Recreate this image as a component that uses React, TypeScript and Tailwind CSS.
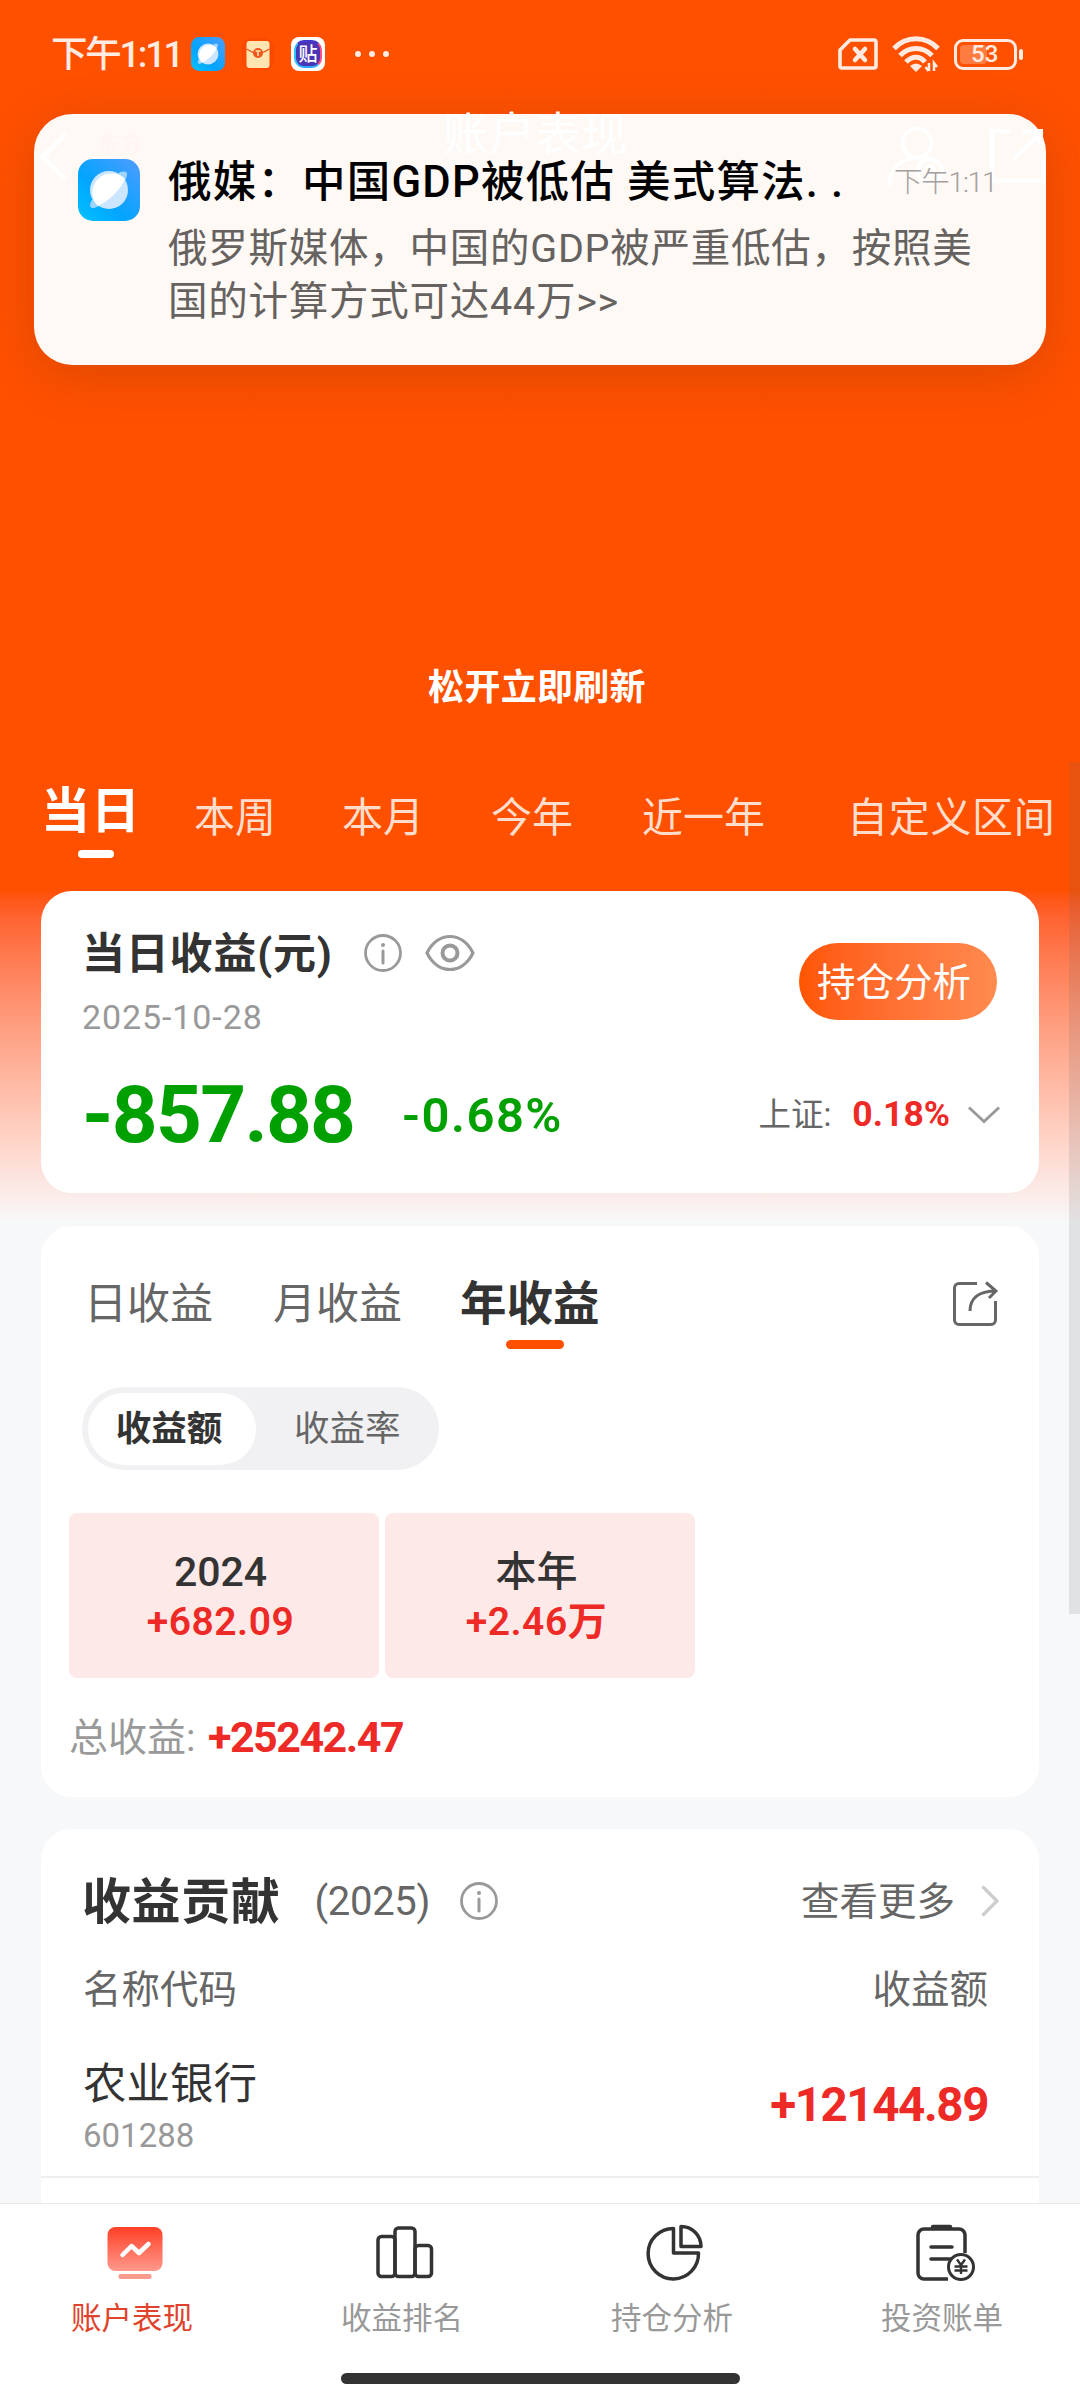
import type { ReactNode } from 'react'
import clsx from 'clsx'

const ranges = [
  { label: '本周', className: 'ml-[53px]' },
  { label: '本月', className: 'ml-[66px]' },
  { label: '今年', className: 'ml-[67px]' },
  { label: '近一年', className: 'ml-[69px]' },
  { label: '自定义区间', className: 'ml-[82px] tracking-[0.7px]' },
]

function BrowserIcon({ className }: { className?: string }) {
  return (
    <svg viewBox="0 0 62 62" className={className}>
      <defs>
        <linearGradient id="sky" x1="0" y1="1" x2="1" y2="0">
          <stop offset="0" stopColor="#00c3ff" />
          <stop offset="0.4" stopColor="#03a4ff" />
          <stop offset="1" stopColor="#4f9cff" />
        </linearGradient>
      </defs>
      <rect width="62" height="62" rx="15" fill="url(#sky)" />
      <path d="M42 13c4-1 8-1 7 3-1 6-6 13-16 22-8 7-16 12-19 11-3-1-2-5 0-8z" fill="#9fd4ff" />
      <circle cx="31" cy="31" r="19" fill="#cde6ff" />
      <path d="M47 20A19 19 0 1 0 20 47C31 42 43 30 47 20z" fill="#fff" />
    </svg>
  )
}

function EnvelopeIcon() {
  return (
    <svg viewBox="0 0 34 34" className="size-[34px]">
      <rect x="1" y="1" width="32" height="32" rx="9" fill="#fb4a00" />
      <rect x="5.500" y="4" width="23" height="27" rx="3" fill="#ffe6b0" />
      <path d="M5.500 12c5 3 7 4.500 11.500 4.500S23.500 15 28.500 12" fill="none" stroke="#e8561c" strokeWidth="1.300" />
      <circle cx="17" cy="16" r="5" fill="#f0541b" />
      <path d="M14.500 14h5M17 14v5" stroke="#ffe6b0" strokeWidth="1.500" />
    </svg>
  )
}

function TiebaIcon() {
  return (
    <div className="flex size-[34px] items-center justify-center rounded-[8px] bg-white">
      <div className="flex size-[28px] items-center justify-center rounded-[10px] border-2 border-t-[#4338c9] border-r-[#ff4d80] border-b-[#2aa8ff] border-l-[#2ac4ff] bg-[#4a35b5] text-[19px] leading-none font-medium text-white">
        贴
      </div>
    </div>
  )
}

function StatusBar() {
  return (
    <div className="flex h-[108px] items-center pr-[57px] pl-[51px] text-[#ffebe1]">
      <span className="mt-[2px] w-[140px] text-[36.500px] leading-none font-medium tracking-[-2.300px] whitespace-nowrap">下午1:11</span>
      <BrowserIcon className="size-[34px]" />
      <div className="ml-4"><EnvelopeIcon /></div>
      <div className="ml-4"><TiebaIcon /></div>
      <div className="ml-[30px] flex gap-[8px]">
        <i className="size-[6px] rounded-full bg-current" />
        <i className="size-[6px] rounded-full bg-current" />
        <i className="size-[6px] rounded-full bg-current" />
      </div>

      <svg viewBox="0 0 40 32" className="ml-auto h-[32px] w-[40px]" fill="none" stroke="currentColor" strokeWidth="3.600" strokeLinejoin="round">
        <path d="M12 2h24a2 2 0 0 1 2 2v24a2 2 0 0 1-2 2H4a2 2 0 0 1-2-2V12z" />
        <path d="M17 11l10 11M27 11L17 22" strokeWidth="4.500" strokeLinecap="round" />
      </svg>
      <svg viewBox="0 0 48 36" className="ml-[14px] h-[36px] w-[48px]" fill="none" stroke="currentColor" strokeWidth="5">
        <path d="M2 12.500C14-.5 34-.5 46 12.500" />
        <path d="M8 19.500c9-9.500 23-9.500 32 0" />
        <path d="M14 26c6-6.500 14-6.500 19 0" />
        <path d="M18 30q6-5 12 0l-6 6z" fill="currentColor" stroke="none" />
        <path d="M37 27v8M33.500 31l3 4M42 35v-8l3 4" strokeWidth="2.500" />
      </svg>
      <div className="ml-[14px] flex h-[31px] w-[63px] items-center rounded-[9px] border-[3px] border-current p-[3px]">
        <div className="flex h-full w-[27px] items-center rounded-[4px] bg-white/25 pl-[11px] text-[24px] leading-none font-medium">53</div>
      </div>
      <i className="ml-[2px] h-[11px] w-[4px] rounded-full bg-current" />
    </div>
  )
}

// Page header, shows faintly through the heads-up notification
function Header() {
  return (
    <header className="relative z-20 flex h-[96px] items-center pl-[38px] text-white">
      <svg viewBox="0 0 32 50" className="h-[50px] w-[32px]" fill="none" stroke="currentColor" strokeWidth="5" strokeLinecap="round">
        <path d="M26 4L5 26l21 21" />
      </svg>
      <span className="-mt-[24px] ml-[26px] w-[50px] text-[23px] leading-none font-black text-[#fff6f3]">东方</span>
      <h1 className="-mt-[44px] ml-[297px] text-[46px] leading-none">账户表现</h1>
      <svg viewBox="0 0 60 60" className="ml-[259px] h-[60px] w-[60px]" fill="none" stroke="currentColor" strokeWidth="4">
        <circle cx="31" cy="17" r="14.500" />
        <path d="M3 60c0-15 10-27 25-28" />
        <circle cx="44" cy="45" r="12" />
        <circle cx="44" cy="45" r="5" strokeWidth="3" />
      </svg>
      <svg viewBox="0 0 56 56" className="ml-[43px] size-[56px]" fill="none" stroke="currentColor" strokeWidth="4">
        <path d="M42 1h12v22L42 6z" fill="currentColor" stroke="none" />
        <path d="M22 3H3v50h51V32M34 3h19M53 3L24 32" />
      </svg>
    </header>
  )
}

function Notification() {
  return (
    <>
      <div className="absolute top-[114px] left-[34px] z-10 h-[251px] w-[1012px] rounded-[38px] bg-[#fef9f5] shadow-[0_10px_50px_rgba(90,50,0,0.22)]" />
      <div className="absolute top-[114px] left-[34px] z-30 flex h-[251px] w-[1012px] pt-[45px] pl-[44px]">
        <BrowserIcon className="size-[62px]" />
        <div className="ml-[28px] flex-1">
          <div className="flex h-[48px] items-center whitespace-nowrap">
            <span className="w-[726px] text-[43.500px] leading-none font-medium tracking-[1.200px] text-black">俄媒：中国GDP被低估 美式算法<span className="tracking-[13px]">..</span></span>
            <span className="mt-[1px] text-[28.500px] leading-none font-light tracking-[-1.300px] text-[#a5a09d]">下午1:11</span>
          </div>
          <p className="mt-[15px] text-[39.500px] leading-[53px] tracking-[0.750px] whitespace-nowrap text-[#666260]">
            俄罗斯媒体，中国的GDP被严重低估，按照美<br />国的计算方式可达44万&gt;&gt;
          </p>
        </div>
      </div>
    </>
  )
}

function InfoIcon() {
  return (
    <svg viewBox="0 0 38 38" className="size-[38px]" fill="none" stroke="#999" strokeWidth="2.800">
      <circle cx="19" cy="19" r="17.500" />
      <path d="M19 17v12" strokeWidth="3" strokeLinecap="round" />
      <circle cx="19" cy="11" r="2" fill="#999" stroke="none" />
    </svg>
  )
}

function Card({ className, children }: { className?: string; children: ReactNode }) {
  return <section className={clsx('mx-[41px] bg-white', className)}>{children}</section>
}

function TodayCard() {
  return (
    <Card className="flex h-[302px] justify-between rounded-[31px] pr-[42px] pl-[41px]">
      <div>
        <div className="mt-[36px] flex h-[52px] items-center">
          <h2 className="mt-[2px] text-[43px] leading-none font-bold tracking-[0.800px] whitespace-nowrap text-[#333]">当日收益(元)</h2>
          <div className="ml-[31px]"><InfoIcon /></div>
          <svg viewBox="0 0 50 38" className="ml-[23px] h-[38px] w-[50px]" fill="none" stroke="#999" strokeWidth="3.200">
            <path d="M2 19C13-3 37-3 48 19 37 41 13 41 2 19z" strokeLinejoin="round" />
            <circle cx="25" cy="19" r="7.500" strokeWidth="4" />
          </svg>
        </div>
        <div className="mt-[17px] text-[34px] leading-[42px] tracking-[0.900px] text-[#999]">2025-10-28</div>
        <div className="mt-[37px] flex h-[80px] items-center text-[#00a000]">
          <span className="w-[320px] text-[80px] leading-none font-bold tracking-[-1.700px]">-857.88</span>
          <span className="text-[49px] leading-none font-semibold tracking-[1.500px]">-0.68%</span>
        </div>
      </div>
      <div className="flex flex-col items-end">
        <button className="mt-[52px] h-[77px] w-[198px] rounded-full bg-linear-to-r from-[#ff5500] to-[#ff8a4f] pt-[3px] pr-[8px] text-[38.500px] leading-none text-white">持仓分析</button>
        <div className="mt-[75px] flex h-[40px] items-center">
          <span className="text-[32.500px] leading-none text-[#666]">上证:</span>
          <span className="ml-[21px] text-[35.500px] leading-none font-bold text-[#ee2a26]">0.18%</span>
          <svg viewBox="0 0 32 18" className="-mr-[3px] ml-[18px] h-[18px] w-[32px]" fill="none" stroke="#999" strokeWidth="2.800">
            <path d="M1 1.500L16 15.500 31 1.500" />
          </svg>
        </div>
      </div>
    </Card>
  )
}

function YearCell({ title, value }: { title: string; value: string }) {
  return (
    <div className="flex h-[165px] w-[310px] flex-col items-center rounded-[8px] bg-[#fde9e8] pt-[34px] pr-[7px]">
      <div className="text-[41px] leading-[50px] font-medium text-[#333]">{title}</div>
      <div className="text-[39px] leading-[51px] font-semibold tracking-[0.500px] text-[#ee2a26]">{value}</div>
    </div>
  )
}

function ProfitCard() {
  return (
    <Card className="mt-[33px] flex h-[571px] flex-col rounded-[31px] pt-[52px]">
      <div className="flex h-[71px] pr-[41px] pl-[43px] leading-[52px] text-[#666]">
        <span className="text-[43px]">日收益</span>
        <span className="ml-[60px] text-[43px]">月收益</span>
        <div className="ml-[58px] flex flex-col items-center">
          <span className="text-[46.500px] font-bold text-[#333]">年收益</span>
          <i className="mt-[10px] ml-[11px] h-[9px] w-[58px] shrink-0 rounded-full bg-[#ff5000]" />
        </div>
        <svg viewBox="0 0 46 46" className="mt-[3px] ml-auto size-[46px]" fill="none" stroke="#666" strokeWidth="3">
          <path d="M25 2.500H7a4.500 4.500 0 0 0-4.500 4.500v32A4.500 4.500 0 0 0 7 43.500h32a4.500 4.500 0 0 0 4.500-4.500V20" />
          <path d="M18 30c0-12 8-20 26-20M34 1.500l10 8.500-7 7" />
        </svg>
      </div>
      <div className="mt-[38px] ml-[41px] flex h-[83px] w-[357px] items-center rounded-full bg-[#f1f1f3] p-[6px] text-[35.500px] leading-none">
        <span className="flex h-[72px] w-[168px] items-center justify-center rounded-full bg-white pt-[2px] pr-[6px] font-bold text-[#333]">收益额</span>
        <span className="mt-[2px] ml-[38px] text-[#666]">收益率</span>
      </div>
      <div className="mt-[43px] ml-[28px] flex gap-[6px]">
        <YearCell title="2024" value="+682.09" />
        <YearCell title="本年" value="+2.46万" />
      </div>
      <div className="mt-[33px] ml-[28px] flex h-[52px] items-center leading-none">
        <span className="mt-[2px] w-[139px] text-[39px] text-[#999]">总收益:</span>
        <span className="mt-[1px] text-[43px] font-bold tracking-[-1.500px] text-[#ee2a26]">+25242.47</span>
      </div>
    </Card>
  )
}

function ContributionCard() {
  return (
    <Card className="mt-[32px] h-[374px] rounded-t-[31px] pt-[44px]">
      <div className="flex h-[56px] items-center pr-[40px] pl-[41px] leading-none">
        <h2 className="mt-[2px] text-[49px] font-bold tracking-[0.600px] text-[#333]">收益贡献</h2>
        <span className="mt-[2px] ml-[34px] text-[40px] tracking-[-0.300px] text-[#666]">(2025)</span>
        <div className="ml-[30px]"><InfoIcon /></div>
        <span className="mt-[2px] ml-auto text-[38.500px] text-[#666]">查看更多</span>
        <svg viewBox="0 0 18 32" className="ml-[26px] h-[32px] w-[18px]" fill="none" stroke="#ccc" strokeWidth="3.200">
          <path d="M1.500 1.500L16 16 1.500 30.500" />
        </svg>
      </div>
      <div className="mt-[35px] flex h-[52px] items-center justify-between pr-[51px] pl-[42px] text-[38.500px] leading-none text-[#666]">
        <span>名称代码</span>
        <span>收益额</span>
      </div>
      <div className="flex h-[162px] items-center justify-between border-b-2 border-[#eee] pr-[51px] pl-[42px]">
        <div className="mt-[23px]">
          <div className="text-[43.500px] leading-[56px] text-[#333]">农业银行</div>
          <div className="text-[33px] leading-[46px] text-[#999]">601288</div>
        </div>
        <span className="mt-[19px] text-[47.500px] leading-none font-bold tracking-[-1.400px] text-[#ee2a26]">+12144.89</span>
      </div>
    </Card>
  )
}

function NavItem({ label, active, children }: { label: string; active?: boolean; children: ReactNode }) {
  return (
    <div className="flex flex-1 flex-col items-center pt-[20px]">
      <svg viewBox="0 0 60 60" className="size-[60px]" fill="none" stroke="#333" strokeWidth="3.500" strokeLinejoin="round">
        {children}
      </svg>
      <span className={clsx('mt-[15px] mr-[6px] text-[30.500px] leading-[40px]', active ? 'text-[#e0432c]' : 'text-[#999]')}>{label}</span>
    </div>
  )
}

function BottomNav() {
  return (
    <nav className="relative h-[197px] border-t border-[#e9e9e9] bg-white">
      <div className="flex">
        <NavItem label="账户表现" active>
          <defs>
            <linearGradient id="screen" x1="0" y1="0" x2="0" y2="1">
              <stop offset="0" stopColor="#ff4026" />
              <stop offset="1" stopColor="#ff998c" />
            </linearGradient>
          </defs>
          <rect x="2.500" y="3" width="55" height="44" rx="8" fill="url(#screen)" stroke="none" />
          <rect x="13.500" y="50" width="33" height="5" rx="2" fill="#f89a8c" stroke="none" />
          <path d="M17.500 31l9-9 7.500 7 9.500-9" stroke="#fff" strokeWidth="4.500" strokeLinecap="round" />
        </NavItem>
        <NavItem label="收益排名">
          <rect x="3" y="12.500" width="17" height="40" rx="3.500" />
          <rect x="20" y="4" width="20" height="48.500" rx="3.500" />
          <rect x="40" y="21.500" width="16.500" height="31" rx="3.500" />
        </NavItem>
        <NavItem label="持仓分析">
          <path d="M28.500 4.500A25.200 25.200 0 1 0 53.500 29H28.500z" />
          <path d="M36 2.500v20h20C56 11 47 2.500 36 2.500z" />
        </NavItem>
        <NavItem label="投资账单">
          <path d="M33 55H9a6 6 0 0 1-6-6V11a6 6 0 0 1 6-6h35a6 6 0 0 1 6 6v18" />
          <path d="M18 3h17" strokeWidth="4.500" strokeLinecap="round" />
          <path d="M16 23h21M16 35h20" strokeLinecap="round" />
          <circle cx="46" cy="43" r="12.500" fill="#fff" strokeWidth="3" />
          <path d="M42 35.500l4 5.500 4-5.500M46 41v9M39.500 42.500h13M39.500 46.500h13" strokeWidth="2.400" />
        </NavItem>
      </div>
      <div className="mx-auto mt-[34px] h-[11px] w-[399px] rounded-full bg-[#333]" />
    </nav>
  )
}

export default function App() {
  return (
    <div className="relative h-[2400px] w-[1080px] overflow-hidden bg-[#f7f8fa] bg-linear-to-b from-[#ff5000] from-[890px] to-[#f7f8fa] to-[1222px] font-['Roboto','Noto_Sans_CJK_SC',sans-serif]">
      <StatusBar />
      <Header />
      <Notification />

      <div className="mt-[462px] h-[45px] pr-[6px] text-center text-[36px] leading-[45px] font-bold tracking-[0.300px] text-white">松开立即刷新</div>

      <div className="mt-[67px] flex h-[113px] pl-[41px] whitespace-nowrap text-[#ffddcc]">
        <div className="flex flex-col items-center">
          <span className="text-[49px] leading-[68px] font-bold tracking-[1px] text-white">当日</span>
          <i className="mt-[4px] ml-[10px] h-[8px] w-[36px] rounded-full bg-white" />
        </div>
        {ranges.map((r) => (
          <span key={r.label} className={clsx('mt-[10px] text-[41px] leading-[60px]', r.className)}>{r.label}</span>
        ))}
      </div>

      <TodayCard />
      <ProfitCard />
      <ContributionCard />
      <BottomNav />

      {/* scroll indicator */}
      <div className="absolute top-[762px] right-0 h-[852px] w-[11px] bg-[#666]/15" />
    </div>
  )
}
